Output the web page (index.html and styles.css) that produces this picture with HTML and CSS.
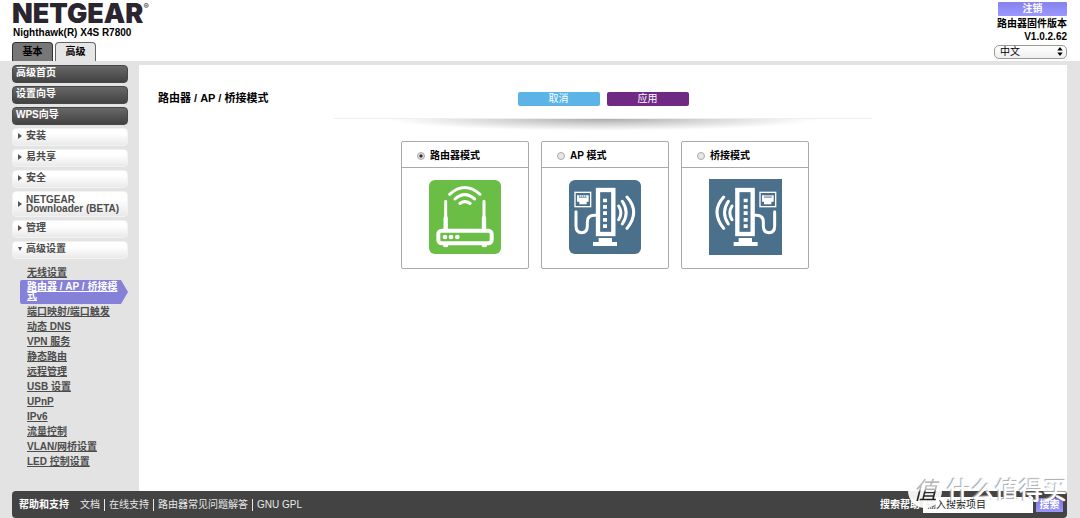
FILE: index.html
```html
<!DOCTYPE html>
<html lang="zh-CN">
<head>
<meta charset="utf-8">
<title>NETGEAR Router R7800</title>
<link rel="stylesheet" href="styles.css">
</head>
<body>
<header class="top">
  <div class="brand">
    <div class="logo">NETGEAR<span class="reg">®</span></div>
    <div class="model">Nighthawk(R) X4S R7800</div>
    <nav class="tabs">
      <button class="tab" type="button">基本</button>
      <button class="tab tab-on" type="button">高级</button>
    </nav>
  </div>
  <div class="account">
    <button class="logout" type="button">注销</button>
    <div class="version">路由器固件版本<br>V1.0.2.62</div>
    <div class="lang">
      <select class="lang-select" aria-label="语言"><option>中文</option></select>
      <svg class="lang-arrows" viewBox="0 0 6 10" aria-hidden="true"><path d="M3 0 6 4H0zM3 10 0 6h6z"/></svg>
    </div>
  </div>
</header>

<div class="body">
  <nav class="side">
    <button class="item dark" type="button">高级首页</button>
    <button class="item dark" type="button">设置向导</button>
    <button class="item dark" type="button">WPS向导</button>
    <button class="item light" type="button"><span class="caret"></span>安装</button>
    <button class="item light" type="button"><span class="caret"></span>易共享</button>
    <button class="item light" type="button"><span class="caret"></span>安全</button>
    <button class="item light tall" type="button"><span class="caret"></span><span>NETGEAR<br>Downloader (BETA)</span></button>
    <button class="item light" type="button"><span class="caret"></span>管理</button>
    <button class="item light" type="button"><span class="caret open"></span>高级设置</button>
    <ul class="sub">
      <li><a href="#">无线设置</a></li>
      <li class="current"><a href="#">路由器 / AP / 桥接模式</a></li>
      <li><a href="#">端口映射/端口触发</a></li>
      <li><a href="#">动态 DNS</a></li>
      <li><a href="#">VPN 服务</a></li>
      <li><a href="#">静态路由</a></li>
      <li><a href="#">远程管理</a></li>
      <li><a href="#">USB 设置</a></li>
      <li><a href="#">UPnP</a></li>
      <li><a href="#">IPv6</a></li>
      <li><a href="#">流量控制</a></li>
      <li><a href="#">VLAN/网桥设置</a></li>
      <li><a href="#">LED 控制设置</a></li>
    </ul>
  </nav>

  <main class="panel">
    <div class="bar">
      <h1 class="title">路由器 / AP / 桥接模式</h1>
      <div class="actions">
        <button class="btn cancel" type="button">取消</button>
        <button class="btn apply" type="button">应用</button>
      </div>
    </div>
    <div class="divider"></div>
    <div class="cards">
      <div class="card">
        <div class="card-head"><input class="radio" type="radio" name="mode" id="m1" checked><label for="m1">路由器模式</label></div>
        <div class="card-body">
          <svg class="pic" viewBox="0 0 216 222" aria-hidden="true">
            <rect width="216" height="222" rx="18" fill="#6abd45"/>
            <g fill="none" stroke="#fff" stroke-linecap="round">
              <path d="M62 43Q107 2 153 43" stroke-width="9"/>
              <path d="M78 57Q107 31 137 57" stroke-width="9"/>
              <path d="M93 70Q108 60 123 70" stroke-width="10"/>
              <path d="M50 64v50M165 64v50" stroke-width="9"/>
              <path d="M50 114v36M165 114v36" stroke-width="13"/>
              <rect x="28" y="152" width="160" height="38" rx="10" stroke-width="12"/>
            </g>
            <g fill="#fff">
              <circle cx="48" cy="171" r="7"/><circle cx="66" cy="171" r="7"/><circle cx="85" cy="171" r="7"/>
              <ellipse cx="50" cy="197" rx="8" ry="5"/><ellipse cx="166" cy="197" rx="8" ry="5"/>
            </g>
          </svg>
        </div>
      </div>
      <div class="card">
        <div class="card-head"><input class="radio" type="radio" name="mode" id="m2"><label for="m2">AP 模式</label></div>
        <div class="card-body">
          <svg class="pic" viewBox="0 0 216 222" aria-hidden="true">
            <defs>
              <g id="modem">
                <g fill="none" stroke="#fff">
                  <rect x="18" y="37" width="47" height="43" stroke-width="4"/>
                  <rect x="87" y="30" width="46" height="132" stroke-width="13"/>
                  <path d="M21 95v43q0 20 17 20t17-20v-12q0-20 22-20h6" stroke-width="9" stroke-linecap="round"/>
                  <path d="M149 78q13 20 0 41M160 64q23 33 0 68M174 51q40 44 0 94" stroke-width="9" stroke-linecap="round"/>
                </g>
                <g fill="#fff">
                  <path d="M24 46h35v19h-6v8H31v-8h-7z"/>
                  <path d="M102 56h12v11h-12zM102 75h12v11h-12zM102 94h12v11h-12zM102 114h12v11h-12zM102 133h12v11h-12z"/>
                  <path d="M89 174h40v12h15v12H72v-12h17z"/>
                </g>
                <path d="M30 52h23M32 46v6M38 46v6M44 46v6M50 46v6" stroke="#4a708b" stroke-width="2"/>
              </g>
            </defs>
            <rect width="216" height="222" rx="18" fill="#4a708b"/>
            <use href="#modem"/>
          </svg>
        </div>
      </div>
      <div class="card">
        <div class="card-head"><input class="radio" type="radio" name="mode" id="m3"><label for="m3">桥接模式</label></div>
        <div class="card-body">
          <svg class="pic pic-square" viewBox="0 0 219 228" aria-hidden="true">
            <rect width="219" height="228" fill="#4a708b"/>
            <use href="#modem" transform="translate(218 3) scale(-1 1)"/>
          </svg>
        </div>
      </div>
    </div>
  </main>
</div>

<footer class="foot">
  <div class="help">
    <b>帮助和支持</b>
    <ul class="links">
      <li><a href="#">文档</a></li>
      <li><a href="#">在线支持</a></li>
      <li><a href="#">路由器常见问题解答</a></li>
      <li><a href="#">GNU GPL</a></li>
    </ul>
  </div>
  <form class="search">
    <label for="q">搜索帮助</label>
    <input class="query" id="q" type="text" placeholder="输入搜索项目">
    <button class="go" type="button">搜索</button>
  </form>
  <div class="mark"><span class="mark-disc"><span class="mark-cut">值</span></span><span class="mark-text">什么值得买</span></div>
</footer>
</body>
</html>
```
FILE: styles.css
```css
* { box-sizing: border-box; }

body {
  margin: 0;
  min-height: 100vh;
  display: flex;
  flex-direction: column;
  background: #e3e3e3;
  color: #000;
  font: 10px/12px "Liberation Sans", Arial, "Noto Sans CJK SC", sans-serif;
}

button, input, select { font: inherit; margin: 0; padding: 0; }
button { border: 0; cursor: pointer; }
a { color: inherit; }

/* header */
.top {
  display: flex;
  justify-content: space-between;
  padding: 0 13px 0 12px;
  background: #fff;
}
.logo {
  height: 27px;
  font: 900 27px/27px Inter, "Liberation Sans", sans-serif;
  color: #2b2530;
  display: flex;
}
.reg { font-size: 8px; line-height: 13px; font-weight: 400; }
.model { font-weight: 700; line-height: 12px; padding-left: 1px; }
.tabs { display: flex; gap: 2px; margin-top: 3px; }
.tab {
  width: 41px;
  height: 19px;
  border: 1px solid #333;
  border-bottom: 0;
  border-radius: 4px 4px 0 0;
  background: #777;
  font-weight: 700;
}
.tab-on { background: #e6e6e6; border-color: #666; }

.account {
  display: flex;
  flex-direction: column;
  align-items: flex-end;
  padding-top: 2px;
}
.logout {
  width: 69px;
  height: 14px;
  border-radius: 1px;
  background: linear-gradient(#8682ee, #9c98ff);
  color: #fff;
  font-weight: 700;
}
.version { margin-top: 1px; font-weight: 700; line-height: 13px; text-align: right; }
.lang { position: relative; margin-top: 2px; }
.lang-select {
  appearance: none;
  display: block;
  width: 73px;
  height: 14px;
  padding-left: 5px;
  border: 1px solid #999;
  border-radius: 5px;
  background: linear-gradient(#fff, #efefef);
  color: #000;
}
.lang-arrows { position: absolute; right: 4px; top: 2px; width: 6px; height: 9px; pointer-events: none; }

/* sidebar */
.body { flex: 1; display: flex; padding: 4px 13px 0 12px; }
.side { width: 127px; flex: none; display: flex; flex-direction: column; gap: 3px; }
.item {
  width: 116px;
  height: 18px;
  border-radius: 4px;
  text-align: left;
  font-weight: 700;
  line-height: 9px;
}
.dark {
  padding: 0 3px 3px;
  background: linear-gradient(#686868, #424242);
  border: 1px solid #484848;
  color: #fff;
}
.light {
  display: grid;
  grid-template-columns: 8px 1fr;
  align-content: center;
  align-items: center;
  padding: 0 0 3px 5px;
  background: linear-gradient(#fff 30%, #e9e9e9);
  border: 1px solid #f2f2f2;
  color: #4b4b4b;
}
.tall { height: 26px; padding-bottom: 0; }
.caret {
  width: 0;
  height: 0;
  border: 3px solid transparent;
  border-left: 4px solid #555;
  border-right: 0;
}
.open { border: 2px solid transparent; border-top: 4px solid #555; border-bottom: 0; }

.sub {
  list-style: none;
  margin: 3px 0 0;
  padding: 0;
  font-weight: 700;
  line-height: 15px;
  color: #4c4c4c;
}
.sub li { margin-left: 8px; padding-left: 7px; }
.sub .current {
  width: 108px;
  padding: 2px 8px 4px 7px;
  border-radius: 2px;
  line-height: 9px;
  background: #8580d8;
  color: #fff;
  clip-path: polygon(0 0, 101px 0, 100% 50%, 101px 100%, 0 100%);
}

/* content */
.panel { flex: 1; min-width: 0; background: #fff; padding-top: 26px; }
.bar {
  display: grid;
  grid-template-columns: 1fr auto 1fr;
  align-items: center;
  padding: 0 19px;
}
.title { margin: 0; font-size: 11px; line-height: 15px; font-weight: 700; white-space: nowrap; }
.actions { display: flex; gap: 7px; }
.btn { width: 82px; height: 14px; border-radius: 2px; color: #fff; padding-top: 1px; }
.cancel { background: #5bb4e5; }
.apply { background: #702a86; }
.divider {
  width: 58%;
  height: 14px;
  margin: 12px auto 9px;
  border-top: 1px solid #eee;
  background: radial-gradient(ellipse 40% 90% at 50% 0, #acacac, #d4d4d4 45%, #fff);
}
.cards { display: flex; justify-content: center; gap: 12px; padding-left: 4px; }
.card { width: 128px; border: 1px solid #aaa; border-radius: 2px; }
.card-head {
  display: flex;
  align-items: center;
  gap: 5px;
  height: 26px;
  padding: 2px 0 0 15px;
  border-bottom: 1px solid #aaa;
  font-weight: 700;
}
.radio {
  appearance: none;
  width: 8px;
  height: 8px;
  border: 1px solid #aaa;
  border-radius: 50%;
  background: #e6e6e6;
}
.radio:checked { background: radial-gradient(#333 30%, #ddd 45%); }
.card-head label { line-height: 12px; }
.card-body { display: flex; justify-content: center; align-items: center; height: 100px; padding-bottom: 2px; }
.pic { width: 72px; height: 74px; }
.pic-square { width: 73px; height: 76px; }

/* footer */
.foot {
  position: relative;
  display: flex;
  justify-content: space-between;
  align-items: center;
  height: 27px;
  margin: 0 13px 0 12px;
  padding: 0 4px 0 7px;
  border-radius: 4px;
  background: #434343;
  color: #fff;
}
.help { display: flex; gap: 11px; }
.links { display: flex; margin: 0; padding: 0; list-style: none; color: #e8e8e8; }
.links li + li { margin-left: 4px; padding-left: 4px; border-left: 1px solid #e8e8e8; }
.links a { text-decoration: none; }
.search { display: flex; align-items: center; gap: 3px; font-weight: 700; }
.query {
  width: 110px;
  height: 16px;
  padding: 0 3px;
  border: 0;
  background: #fff;
  font-weight: 400;
}
.query::placeholder { color: #222; opacity: 1; }
.go { width: 27px; height: 14px; background: linear-gradient(#7b76e0, #9a96fb); color: #fff; font-weight: 700; }

/* watermark laid over the footer edge */
.mark {
  position: absolute;
  right: 0;
  top: -17px;
  display: flex;
  align-items: center;
  gap: 5px;
  pointer-events: none;
  white-space: nowrap;
}
.mark-disc {
  width: 34px;
  height: 34px;
  border-radius: 50%;
  background: rgba(255, 255, 255, .92);
  text-align: center;
  font-size: 24px;
  line-height: 34px;
}
.mark-cut {
  display: block;
  background: linear-gradient(#b8b8b8 45%, #222 55%);
  background-clip: text;
  -webkit-background-clip: text;
  color: transparent;
  font-style: italic;
}
.mark-text {
  font-size: 24px;
  line-height: 34px;
  font-weight: 500;
  color: #fff;
  text-shadow: -1px -1px 1px #aaa;
}
```
